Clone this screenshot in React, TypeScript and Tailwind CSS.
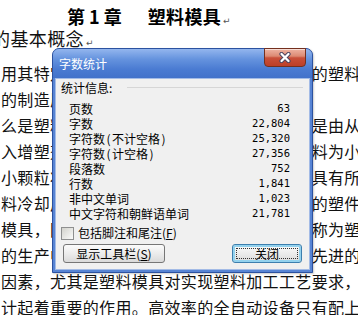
const CJK = "font-['Noto_Sans_CJK_SC','Noto_Sans',sans-serif]";

const bodyLines = [
  "用其特定的形状去成型具有一定形状和尺寸的塑料制品",
  "的制造质量和生产效率。",
  "么是塑料模具？简单地说，塑料模具通常都是由从原料",
  "入增塑剂、稳定剂、填充剂等各种添加剂原料为小颗",
  "小颗粒状的塑料，经加热熔融后注入模腔，具有所需",
  "料冷却后，即可获得与模腔形状一致，所需的塑件。",
  "模具，因此，在塑料制品的生产中，模具被称为塑料",
  "的生产中，模具是决定产品质量与能否采用先进的成",
  "因素，尤其是塑料模具对实现塑料加工工艺要求，塑",
  "计起着重要的作用。高效率的全自动设备只有配上能",
];

const stats = [
  { label: "页数", value: "63" },
  { label: "字数", value: "22,804" },
  { label: "字符数", note: "不计空格", value: "25,320" },
  { label: "字符数", note: "计空格", value: "27,356" },
  { label: "段落数", value: "752" },
  { label: "行数", value: "1,841" },
  { label: "非中文单词", value: "1,023" },
  { label: "中文字符和朝鲜语单词", value: "21,781" },
];

const Mark = () => (
  <span className="ml-[2px] font-['DejaVu_Sans',sans-serif] text-[9px] font-normal text-[#555]">↵</span>
);

function Document() {
  return (
    <div className={`${CJK} text-[#111]`}>
      <div className="h-[26px] whitespace-nowrap pl-[67px] text-[18px] leading-[33px] font-bold text-black">
        第 1 章<span className="ml-[26px] tracking-[0.3px]">塑料模具</span>
        <Mark />
      </div>
      <div className="h-[34px] -ml-[8px] whitespace-nowrap text-[18px] leading-[24px] tracking-[0.4px]">
        的基本概念
        <Mark />
      </div>
      <div className="pl-[1px] text-[16px] tracking-[0.35px]">
        {bodyLines.map((line, i) => (
          <div key={i} className="h-[26px] whitespace-nowrap leading-[26px]">
            {line}
          </div>
        ))}
      </div>
    </div>
  );
}

function CloseButton() {
  return (
    <div className="mr-[6px] -mt-px flex h-[19px] w-[42px] items-center justify-center rounded-b-[4px] border border-[#74301f] bg-[linear-gradient(180deg,#eeb4a3_0%,#dc8a73_42%,#c9503a_52%,#bd3f28_100%)] shadow-[inset_0_1px_0_rgba(255,255,255,0.55)]">
      <svg width="14" height="11" viewBox="0 0 14 11">
        <path d="M3.5 2 L10.5 9 M10.5 2 L3.5 9" stroke="#4b4460" strokeWidth="4.2" strokeLinecap="round" />
        <path d="M3.5 2 L10.5 9 M10.5 2 L3.5 9" stroke="#ffffff" strokeWidth="2.3" strokeLinecap="round" />
      </svg>
    </div>
  );
}

function WordCountDialog() {
  return (
    <div className={`${CJK} absolute left-[52px] top-[48px] flex h-[225px] w-[261px] flex-col rounded-t-[7px] border border-[#2c52a0] bg-[#5784d4] shadow-[1px_1px_2px_rgba(0,0,0,0.2)]`}>
      <div className="flex h-[29px] items-start justify-between rounded-t-[6px] bg-[linear-gradient(180deg,#93b6ee_0%,#6593de_35%,#4a7bd2_70%,#4272ca_100%)]">
        <span className="pl-[6px] pt-[8px] text-[12px] leading-[14px] text-white">字数统计</span>
        <CloseButton />
      </div>

      <div className="mx-[2px] mb-[2px] flex flex-1 flex-col border border-[#a3bbe6] bg-[#f0f0f0] text-[12px] text-black">
        <div className="flex items-center pl-[5px] pr-[6px] pt-[2px] leading-[14px]">
          <span>统计信息:</span>
          <span className="ml-auto h-[2px] w-[176px] border-t border-[#d6d6d6] border-b-white" />
        </div>

        <div className="mt-[6px] flex flex-col pl-[13px] pr-[19px]">
          {stats.map((s, i) => (
            <div key={i} className="flex h-[15px] items-center justify-between leading-[15px]">
              <span className="whitespace-nowrap">
                {s.label}
                {s.note && (
                  <>
                    <span className="px-[1.5px]">(</span>
                    {s.note}
                    <span className="px-[1.5px]">)</span>
                  </>
                )}
              </span>
              <span className="font-['DejaVu_Sans_Mono',monospace] text-[10.5px]">{s.value}</span>
            </div>
          ))}
        </div>

        <div className="mt-[4px] flex h-[16px] items-center pl-[5px] leading-[16px]">
          <span className="h-[13px] w-[13px] border border-[#8e8f8f] bg-[linear-gradient(135deg,#d2d2cc,#fbfbfa)]" />
          <span className="ml-[4px]">
            包括脚注和尾注(<span className="underline">F</span>)
          </span>
        </div>

        <div className="mt-[3px] flex items-center justify-between px-[7px]">
          <div className="flex h-[19px] w-[102px] items-center justify-center rounded-[3px] border border-[#767676] bg-[linear-gradient(180deg,#fbfbfb,#ececec_50%,#dadada)] leading-[14px]">
            显示工具栏(<span className="underline">S</span>)
          </div>
          <div className="relative flex h-[19px] w-[70px] items-center justify-center rounded-[3px] border border-[#3d7fae] bg-[linear-gradient(180deg,#fbfbfb,#ececec_50%,#dadada)] leading-[14px] shadow-[inset_0_0_0_2px_#93d2ee]">
            <span className="absolute inset-[3px] border border-dotted border-[#333]" />
            关闭
          </div>
        </div>
      </div>
    </div>
  );
}

export default function App() {
  return (
    <div className="relative h-[315px] w-[358px] overflow-hidden bg-white">
      <Document />
      <WordCountDialog />
    </div>
  );
}
